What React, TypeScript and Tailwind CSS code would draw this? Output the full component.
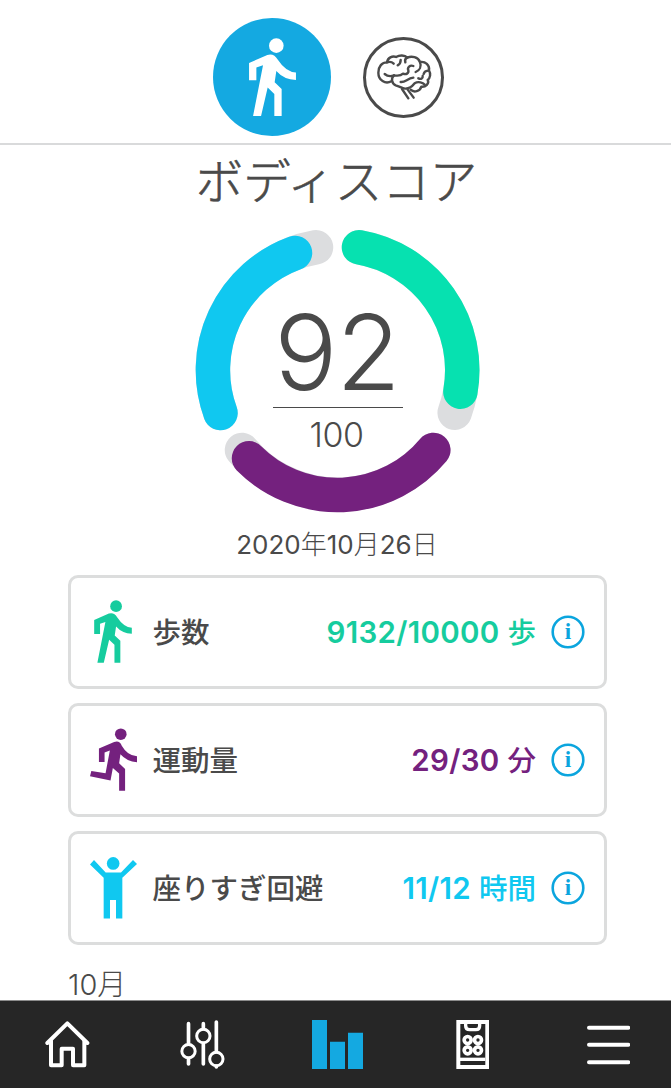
import React from 'react';

interface IconProps {
  className?: string;
}

function WalkIcon({ className }: IconProps) {
  return (
    <svg viewBox="147 113 141 236" className={className} fill="currentColor">
      <circle cx="229" cy="136" r="22" />
      <path d="M147 188L202 164Q222 158 233 178Q258 216 288 217V239Q252 238 229 212L224 246L245 266V348H223V281L203 262L183 348H159L189 195L169 202V240H147Z" />
    </svg>
  );
}

function RunIcon({ className }: IconProps) {
  return (
    <svg viewBox="92 84 142 189" className={className} fill="currentColor">
      <circle cx="185" cy="102" r="17.5" />
      <path d="M119 145L165 126Q181 120 188 137Q205 167 234 169V187Q203 185 184 163L180 190L198 207V273H180V221L161 204L154 242L92 229L96 213L139 220L152 151L136 157V186H119Z" />
    </svg>
  );
}

function StandIcon({ className }: IconProps) {
  return (
    <svg viewBox="90 101 141 184" className={className} fill="currentColor">
      <circle cx="159.5" cy="120" r="19" />
      <path d="M102 110L137 147H183L219 110L231 122L187 163V285H168V230H150V285H131V163L90 123Z" />
    </svg>
  );
}

function BrainIcon({ className }: IconProps) {
  return (
    <svg
      viewBox="528 160 168 142"
      className={className}
      fill="none"
      stroke="currentColor"
      strokeWidth="7.2"
      strokeLinecap="round"
      strokeLinejoin="round"
    >
      <path d="M574 245C556 255 535 242 535 219C535 200 546 188 561 188C563 174 577 168 588 172C598 166 614 165 622 174C635 168 654 172 660 187C676 184 690 197 687 212C693 222 691 235 683 241C689 251 677 263 664 261C660 275 642 280 632 270" />
      <path d="M561 188C570 185 577 188 581 192M602 181C602 190 599 194 593 197M622 174C616 176 614 181 616 188" />
      <path d="M554 223C562 230 572 231 582 227C594 229 603 228 609 222C618 226 627 221 625 212C621 204 630 195 640 199" />
      <path d="M582 227C572 236 575 252 587 257C599 260 606 266 615 267C630 268 637 260 644 251C655 244 669 249 674 255M602 247C616 249 622 236 640 234" />
      <path d="M660 187C665 200 659 212 647 217M684 213C676 214 672 218 671 223M655 236C664 240 669 236 668 229" />
      <path d="M606 268L625 296M623 270L641 294" />
    </svg>
  );
}

function HomeIcon() {
  return (
    <svg viewBox="131 88 140 150" className="h-[50px] w-[46.7px]" fill="none" stroke="white" strokeWidth="12" strokeLinejoin="round" strokeLinecap="round">
      <path d="M141 157L201 98L261 157" />
      <path d="M152 150V224H184V174H218V224H252V150" />
    </svg>
  );
}

function SlidersIcon() {
  return (
    <svg viewBox="536 88 140 150" className="h-[50px] w-[46.7px]" fill="none" stroke="white" strokeWidth="11" strokeLinecap="round">
      <path d="M564.500 99V160M564.500 205V220M609 99V114M609 159V220M648 94V183M648 226V229" />
      <g strokeWidth="9">
        <circle cx="564.500" cy="181.500" r="20" />
        <circle cx="609" cy="136" r="20" />
        <circle cx="648" cy="205" r="20" />
      </g>
    </svg>
  );
}

function ChartIcon() {
  return (
    <svg viewBox="36 88 153 150" className="h-[50px] w-[51px]" fill="#14a9e1">
      <path d="M36 88H81V235H36ZM90 153H135V235H90ZM144 126H189V235H144Z" />
    </svg>
  );
}

function DeviceIcon() {
  return (
    <svg viewBox="467 88 100 150" className="h-[50px] w-[33.3px]" fill="none" stroke="white" strokeWidth="12">
      <path d="M474 94H561V229H474Z" />
      <path d="M479 206H555" strokeWidth="10" />
      <path d="M496 98V105Q496 117 508 117H527Q538 117 538 105V98" strokeWidth="10" />
      <g strokeWidth="11">
        <circle cx="502" cy="148" r="10.500" />
        <circle cx="533" cy="148" r="10.500" />
        <circle cx="502" cy="179" r="10.500" />
        <circle cx="533" cy="179" r="10.500" />
      </g>
    </svg>
  );
}

function MenuIcon() {
  return (
    <svg viewBox="861 88 130 150" className="h-[50px] w-[43.3px]" stroke="white" strokeWidth="12" strokeLinecap="round">
      <path d="M867 111H985M867 162.500H985M867 215H985" />
    </svg>
  );
}

function ScoreRing() {
  return (
    <svg viewBox="195 228 286 286" className="col-start-1 row-start-1 h-[286px] w-[286px]" fill="none" strokeWidth="34.5" strokeLinecap="round">
      <g stroke="#dcdddf">
        <path d="M359 247.300A124.700 124.700 0 0 1 454.700 412.700" />
        <path d="M433.300 450A124.700 124.700 0 0 1 242 450" />
        <path d="M220.500 413A124.700 124.700 0 0 1 316 247.300" />
      </g>
      <path stroke="#06e1b0" d="M359 247.300A124.700 124.700 0 0 1 460.400 391.700" />
      <path stroke="#74217e" d="M433.300 450A124.700 124.700 0 0 1 249 458.300" />
      <path stroke="#10c8f0" d="M220.500 413A124.700 124.700 0 0 1 295 253" />
    </svg>
  );
}

function InfoIcon() {
  return (
    <svg viewBox="0 0 34 34" className="ml-[15px] size-[34px] shrink-0">
      <circle cx="17" cy="17" r="15.300" fill="none" stroke="#0ba5de" strokeWidth="2.600" />
      <text x="17" y="24" textAnchor="middle" fill="#0ba5de" className="font-['Liberation_Serif',serif] text-[23px] font-bold">
        i
      </text>
    </svg>
  );
}

interface MetricCardProps {
  icon: React.ReactNode;
  label: string;
  value: string;
  unit: string;
  color: string;
}

function MetricCard({ icon, label, value, unit, color }: MetricCardProps) {
  return (
    <div className={`flex h-[113.5px] items-center rounded-[10px] border-[3.5px] border-[#dcdddd] pr-[19px] ${color}`}>
      <div className="flex w-[81.5px] shrink-0 justify-center pl-[3px]">{icon}</div>
      <div className="pt-[4px] text-[28.5px] font-medium text-[#4a4a4a]">{label}</div>
      <div className="ml-auto flex items-baseline gap-[8px] pt-[2px] whitespace-nowrap">
        <span className="text-[29.5px] font-semibold tracking-[0.3px]">{value}</span>
        <span className="text-[28.5px] font-medium">{unit}</span>
      </div>
      <InfoIcon />
    </div>
  );
}

export default function App() {
  return (
    <div className="flex h-[1088px] w-[671px] flex-col overflow-hidden bg-white font-['Inter','Noto_Sans_CJK_JP',sans-serif] text-[#4a4a4a]">
      <header className="flex h-[145px] shrink-0 items-center border-b-2 border-[#d9dadb] pt-[11px] pl-[213px]">
        <div className="flex size-[117.5px] items-center justify-center rounded-full bg-[#14a9e1] pl-[2px] text-white">
          <WalkIcon className="h-[78.5px] w-[47px]" />
        </div>
        <div className="ml-[32.5px] flex size-[81px] items-center justify-center rounded-full border-[3.5px] border-[#4a4a4a]">
          <BrainIcon className="h-[47.3px] w-[56px]" />
        </div>
      </header>

      <main className="flex h-[855px] shrink-0 flex-col overflow-hidden">
        <h1 className="h-[83px] shrink-0 pt-[2px] pl-[2px] text-center text-[47.5px] leading-[70px] font-light [-webkit-text-stroke:0.6px]">ボディスコア</h1>
        <div className="ml-[195px] grid size-[286px] shrink-0">
          <ScoreRing />
          <div className="col-start-1 row-start-1 flex flex-col items-center pt-[72px]">
            <div className="flex h-[108px] w-[130px] justify-center border-b border-[#4a4a4a] pr-[2px] text-[105px] leading-[104px] font-light tracking-[-1px]">92</div>
            <div className="pr-[3px] text-[34px] leading-[54px] font-light tracking-[-0.5px]">100</div>
          </div>
        </div>
        <div className="h-[61px] shrink-0 pt-[11px] pl-[3px] text-center text-[26px] leading-[40px]">
          2020<span className="font-light">年</span>10<span className="font-light">月</span>26<span className="font-light">日</span>
        </div>
        <div className="ml-[68px] flex w-[539px] shrink-0 flex-col gap-[14.5px]">
          <MetricCard
            icon={<WalkIcon className="h-[63px] w-[38px]" />}
            label="歩数"
            value="9132/10000"
            unit="歩"
            color="text-[#16cc9e]"
          />
          <MetricCard
            icon={<RunIcon className="h-[63px] w-[47px]" />}
            label="運動量"
            value="29/30"
            unit="分"
            color="text-[#74217e]"
          />
          <MetricCard
            icon={<StandIcon className="h-[61.5px] w-[47px]" />}
            label="座りすぎ回避"
            value="11/12"
            unit="時間"
            color="text-[#10c8f0]"
          />
        </div>
        <div className="mt-[19px] shrink-0 pl-[68px] text-[29px] leading-[42px] font-[350]">
          10<span className="font-light">月</span>
        </div>
      </main>

      <nav className="grid h-[88px] w-[677px] shrink-0 grid-cols-[134px_136px_135px_135px_137px] items-start justify-items-center border-t border-[#8c8c8c] bg-[#262626] pt-[18.5px]">
        <HomeIcon />
        <SlidersIcon />
        <ChartIcon />
        <DeviceIcon />
        <MenuIcon />
      </nav>
    </div>
  );
}
